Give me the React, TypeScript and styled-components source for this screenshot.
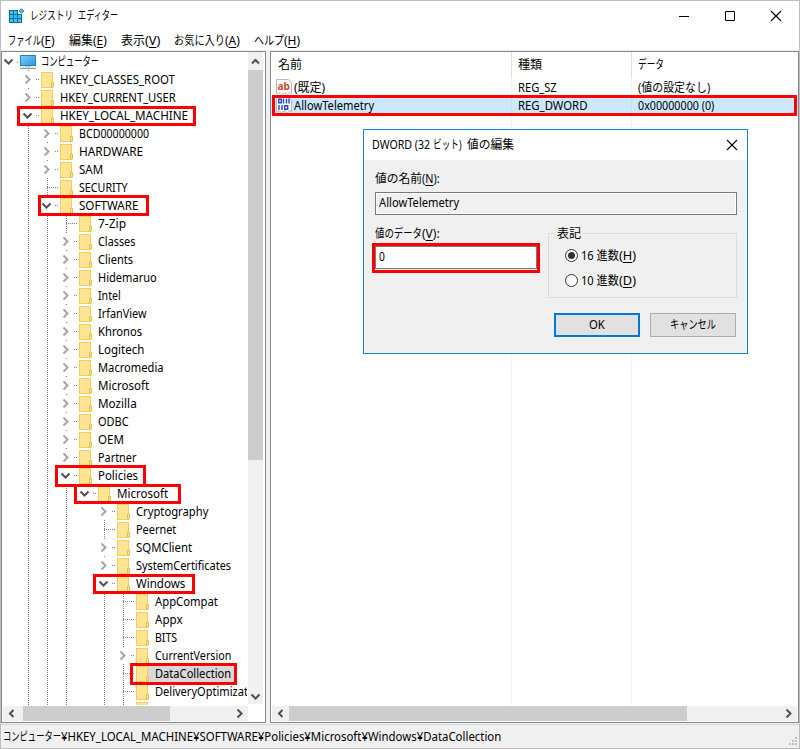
import React, { useLayoutEffect, useRef, useState } from 'react';
import styled, { createGlobalStyle, css } from 'styled-components';

const Global = createGlobalStyle`
  * { box-sizing: border-box; }
  body { margin: 0; }
  body, button, input { font: 12px/18px "Noto Sans", "Noto Sans CJK JP", sans-serif; color: #000; }
`;

/* Text squeezed or stretched horizontally to a given advance width. */
const FitBox = styled.span<{ $w: number }>`
  display: inline-block; width: ${p => p.$w}px; height: 18px; line-height: 18px; flex: none; white-space: nowrap; vertical-align: top;
`;
const FitInner = styled.span`
  display: inline-block; transform-origin: 0 50%; white-space: pre;
  u { text-decoration: underline; text-underline-offset: 2px; text-decoration-thickness: 1px; }
`;
function Fit({ w, children }: { w: number; children: React.ReactNode }) {
  const ref = useRef<HTMLSpanElement>(null);
  const [scale, setScale] = useState(1);
  useLayoutEffect(() => {
    if (ref.current) setScale(w / ref.current.offsetWidth);
  }, [w]);
  return <FitBox $w={w}><FitInner ref={ref} style={{ transform: `scaleX(${scale})` }}>{children}</FitInner></FitBox>;
}

const Window = styled.div`
  position: relative; width: 800px; height: 749px; border: 1px solid #bdbdbd; background: #f0f0f0;
  display: flex; flex-direction: column; overflow: hidden;
`;
const TitleBar = styled.header`
  height: 30px; flex: none; background: #fff; display: flex; align-items: center; padding-left: 8px;
`;
const AppTitle = styled.div`flex: 1; display: flex; gap: 5px; padding-left: 5px;`;
const CaptionButton = styled.button`
  width: 46px; height: 28px; border: 0; padding: 0; background: none; display: grid; place-items: center;
`;
const MenuBar = styled.nav`
  height: 19px; flex: none; background: #fff; display: flex; gap: 14px; padding: 1px 0 0 7px;
`;
const Menu = styled.div`display: flex;`;
const Panels = styled.main`
  height: 672px; flex: none; margin-top: 1px; display: flex; gap: 4px;
`;
const Panel = styled.section<{ $w: number }>`
  width: ${p => p.$w}px; height: 672px; flex: none; border: 1px solid #828790; background: #fff;
  display: flex; flex-direction: column; overflow: hidden;
`;
const TreeArea = styled.div`height: 653px; display: flex; flex: none;`;
const Tree = styled.ul`
  width: 245px; margin: 0; padding: 0; list-style: none; overflow: hidden; flex: none;
`;
const Row = styled.li`height: 18px; display: flex; white-space: nowrap;`;
const dotsY = css`repeating-linear-gradient(180deg, #808080 0 1px, transparent 1px 2px)`;
const dotsX = css`repeating-linear-gradient(90deg, #808080 0 1px, transparent 1px 2px)`;
const Margin = styled.span`width: 17px; flex: none;`;
const Guide = styled.span<{ $line?: boolean }>`
  width: 19px; height: 18px; flex: none;
  background: ${p => (p.$line ? css`${dotsY} 9px 0 / 1px 18px no-repeat` : 'none')};
`;
const Joint = styled.span<{ $kind: 'leaf' | 'open' | 'closed' | 'root' }>`
  width: ${p => (p.$kind === 'root' ? 17 : 22)}px; height: 18px; flex: none; display: flex; align-items: center;
  background: ${p =>
    p.$kind === 'leaf'
      ? css`${dotsY} 9px 0 / 1px 18px no-repeat, ${dotsX} 9px 9px / 11px 1px no-repeat`
      : p.$kind === 'root'
        ? css`${dotsX} 15px 10px / 2px 1px no-repeat`
        : css`${dotsY} 9px 0 / 1px 2px no-repeat, ${dotsX} 17px 9px / 4px 1px no-repeat`};
  svg { margin: 1px 0 0 ${p => (p.$kind === 'root' ? 1 : p.$kind === 'open' ? 3 : 3)}px; }
`;
const Label = styled.span<{ $sel?: boolean; $root?: boolean }>`
  height: 18px; display: flex; padding: 1px 3px 0 ${p => (p.$root ? 4 : 6)}px;
  ${p => p.$sel && css`background: #d9d9d9;`}
`;
const FolderSlot = styled.span<{ $sel?: boolean }>`
  width: 13px; height: 18px; flex: none; display: flex; ${p => p.$sel && css`background: #d9d9d9;`}
`;

const Chevron = ({ dir, color = '#505050' }: { dir: 'up' | 'down' | 'left' | 'right'; color?: string }) => {
  const d = { up: 'M2 7.5 5.5 4 9 7.5', down: 'M1.500 3.5 5.5 7.500 9.500 3.5', left: 'M7.5 2 4 5.5 7.5 9', right: 'M3.5 1.500 7.5 5.5 3.5 9.5' }[dir];
  return <svg width="11" height="11" viewBox="0 0 11 11"><path d={d} fill="none" stroke={color} strokeWidth="2" /></svg>;
};
const Folder = () => (
  <svg width="13" height="18" viewBox="0 0 13 18">
    <rect x="0.5" y="2.5" width="11" height="15" fill="#ffe591" stroke="#f0cd5c" />
    <path d="M10.5 12.5h2v4.500h-2z" fill="#ffe793" stroke="#e9bd45" />
  </svg>
);
const Computer = () => (
  <svg width="18" height="18" viewBox="0 0 18 18">
    <defs><linearGradient id="screen" x1="0" y1="0" x2="1" y2="1"><stop offset="0" stopColor="#7fd0fa" /><stop offset="1" stopColor="#2a96de" /></linearGradient></defs>
    <rect x="1.5" y="3.5" width="15" height="10" fill="url(#screen)" stroke="#2585c4" />
    <path d="M6 14.500h6" stroke="#b9c6ce" />
    <path d="M1 16.500h16" stroke="#8a9aa6" />
    <path d="M2 15.500h14" stroke="#dde4e8" />
  </svg>
);
const AppIcon = () => (
  <svg width="16" height="16" viewBox="0 0 16 16">
    <path d="M0 2h13v13H0z" fill="#0c6f9f" />
    <path d="M1 3h3v3H1zM5 3h3v3H5zM1 7h3v3H1zM5 7h3v3H5zM9 7h3v3H9zM1 11h3v3H1zM5 11h3v3H5zM9 11h3v3H9z" fill="#3cc0ec" />
    <path d="M9 1h5v5H9z" fill="#fff" />
    <path d="M12.500.7 14.800 3 12.500 5.300 10.200 3z" fill="#54c5ea" stroke="#1580ad" />
  </svg>
);

type TreeNode = [level: number, name: string, width: number, kind: 'leaf' | 'open' | 'closed'];
const nodes: TreeNode[] = [
  [1, 'HKEY_CLASSES_ROOT', 115, 'closed'], [1, 'HKEY_CURRENT_USER', 116, 'closed'], [1, 'HKEY_LOCAL_MACHINE', 128, 'open'],
  [2, 'BCD00000000', 70, 'closed'], [2, 'HARDWARE', 64, 'closed'], [2, 'SAM', 24, 'closed'], [2, 'SECURITY', 49, 'leaf'], [2, 'SOFTWARE', 59, 'open'],
  [3, '7-Zip', 28, 'leaf'], [3, 'Classes', 37, 'closed'], [3, 'Clients', 35, 'closed'], [3, 'Hidemaruo', 59, 'closed'], [3, 'Intel', 23, 'closed'],
  [3, 'IrfanView', 49, 'closed'], [3, 'Khronos', 44, 'closed'], [3, 'Logitech', 46, 'closed'], [3, 'Macromedia', 66, 'closed'],
  [3, 'Microsoft', 51, 'closed'], [3, 'Mozilla', 39, 'closed'], [3, 'ODBC', 31, 'closed'], [3, 'OEM', 26, 'closed'], [3, 'Partner', 38, 'closed'],
  [3, 'Policies', 40, 'open'], [4, 'Microsoft', 51, 'open'], [5, 'Cryptography', 72, 'closed'], [5, 'Peernet', 40, 'leaf'],
  [5, 'SQMClient', 56, 'closed'], [5, 'SystemCertificates', 95, 'closed'], [5, 'Windows', 49, 'open'],
  [6, 'AppCompat', 63, 'leaf'], [6, 'Appx', 28, 'leaf'], [6, 'BITS', 22, 'leaf'], [6, 'CurrentVersion', 76, 'closed'],
  [6, 'DataCollection', 76, 'leaf'], [6, 'DeliveryOptimizat', 93, 'leaf'], [6, '', 0, 'leaf'],
];

const VScroll = styled.div`
  width: 15px; height: 652px; margin-left: 1px; background: #f0f0f0; display: flex; flex-direction: column; align-items: center; flex: none;
`;
const VThumb = styled.div`width: 15px; height: 390px; background: #cdcdcd; margin-bottom: auto;`;
const ScrollCap = styled.div<{ $w: number; $h: number }>`
  width: ${p => p.$w}px; height: ${p => p.$h}px; display: grid; place-items: center; flex: none;
`;
const HScroll = styled.div<{ $w: number }>`
  width: ${p => p.$w}px; height: 15px; margin-left: 1px; margin-top: 1px; background: #f0f0f0; display: flex; flex: none;
`;
const HThumb = styled.div<{ $w: number; $gap?: number }>`
  width: ${p => p.$w}px; height: 15px; background: #cdcdcd; margin-left: ${p => p.$gap ?? 0}px; margin-right: auto;
`;

const List = styled.div`
  height: 653px; flex: none; display: grid; grid-template-columns: 241px 120px 1fr; grid-template-rows: 26px 18px 18px 1fr;
`;
const Cell = styled.div<{ $head?: boolean; $sel?: boolean; $last?: boolean; $pad: number }>`
  display: flex; padding-left: ${p => p.$pad}px; padding-top: ${p => (p.$head ? 4 : 1)}px;
  border-right: ${p => (p.$last ? '0' : `1px solid ${p.$head ? '#e0e0e0' : p.$sel ? '#c2dff6' : '#ecf4fc'}`)};
  background: ${p => (p.$sel ? '#cce8ff' : '#fff')};
  svg { flex: none; margin: 0 2px 0 0; }
`;
const ValueIcon = ({ binary }: { binary?: boolean }) => (
  <svg width="16" height="16" viewBox="0 0 16 16">
    <path d="M.5.5h12l3 3v11l-2-1-2 2-3-2-3 2-2-1.500-3 .5z" fill="#fff" stroke="#b8b8b8" />
    {binary ? (
      <g fill="none" stroke="#2943c9" strokeWidth="1.4"><path d="M2.700 2.200h2.600v3.600H2.700zM7.500 1.500v5M10.500 1.500v5M13 1.500v5M3 8v5M6 8v5M8.700 8.700h3v3.600h-3z" /></g>
    ) : (
      <text x="1.500" y="10.500" fontFamily="Noto Sans" fontWeight="bold" fontSize="10.500" textLength="12.500" lengthAdjust="spacingAndGlyphs" fill="#d0492b">ab</text>
    )}
  </svg>
);

const StatusBar = styled.footer`
  height: 24px; margin-top: 1px; border-top: 1px solid #d7d7d7; display: flex; align-items: center; padding-left: 2px; flex: none;
`;
const Grip = styled.svg`margin: 9px 1px 0 auto;`;

const Mark = styled.div<{ $x: number; $y: number; $w: number; $h: number }>`
  position: absolute; left: ${p => p.$x - 1}px; top: ${p => p.$y - 1}px; width: ${p => p.$w}px; height: ${p => p.$h}px;
  border: 3px solid #f00; pointer-events: none;
`;

const Dialog = styled.div`
  position: absolute; left: 362px; top: 128px; width: 385px; height: 225px; border: 1px solid #1883d7; background: #f0f0f0;
`;
const DialogTitle = styled.div`
  height: 30px; background: #fff; display: flex; align-items: center; justify-content: space-between; padding: 0 9px 0 8px;
`;
const DialogBody = styled.div`padding: 10px 10px 0 11px;`;
const TextLine = styled.div`display: flex; height: 18px;`;
const Field = styled.div<{ $editable?: boolean }>`
  height: 23px; width: ${p => (p.$editable ? 162 : 362)}px; margin-top: ${p => (p.$editable ? 3 : 4)}px; border: 1px solid #7a7a7a;
  box-shadow: inset 0 0 0 1px #fff; background: ${p => (p.$editable ? '#fff' : '#f0f0f0')}; padding: 1px 0 0 3px;
`;
const Columns = styled.div`display: flex; justify-content: space-between; margin-top: 10px;`;
const Group = styled.fieldset`
  width: 189px; height: 74px; margin: -1px 0 0; padding: 1px 0 0 16px; border: 1px solid #dcdcdc; min-width: 0;
  legend { margin-left: -11px; padding: 1px 2px 0 3px; height: 18px; display: flex; }
`;
const Radio = styled.label`display: flex; height: 25px; align-items: center;`;
const Dot = styled.span<{ $on?: boolean }>`
  width: 13px; height: 13px; margin-right: 3px; border: 1px solid #333; border-radius: 50%; background: #fff; display: grid; place-items: center;
  ${p => p.$on && css`&::after { content: ''; width: 7px; height: 7px; border-radius: 50%; background: #333; }`}
`;
const Buttons = styled.div`display: flex; justify-content: flex-end; gap: 10px; margin-top: 15px; padding-right: 1px;`;
const PushButton = styled.button<{ $primary?: boolean }>`
  width: 86px; height: 24px; padding: 0; display: flex; align-items: center; justify-content: center;
  background: #e1e1e1; border: ${p => (p.$primary ? '2px solid #0078d7' : '1px solid #adadad')};
`;
const CloseX = () => <svg width="12" height="12" viewBox="0 0 12 12"><path d="m1 1 10 10M11 1 1 11" stroke="#000" strokeWidth="1.1" /></svg>;

export default function App() {
  return (
    <>
      <Global />
      <Window>
        <TitleBar>
          <AppIcon />
          <AppTitle><Fit w={43}>レジストリ</Fit><Fit w={40}>エディター</Fit></AppTitle>
          <CaptionButton><svg width="12" height="12"><path d="M1 6.500h10" stroke="#000" /></svg></CaptionButton>
          <CaptionButton><svg width="12" height="12"><path d="M1.500 1.500h9v9h-9z" stroke="#000" fill="none" /></svg></CaptionButton>
          <CaptionButton><CloseX /></CaptionButton>
        </TitleBar>
        <MenuBar>
          <Menu><Fit w={33}>ファイル</Fit><Fit w={14}>(<u>F</u>)</Fit></Menu>
          <Menu><Fit w={24}>編集</Fit><Fit w={14}>(<u>E</u>)</Fit></Menu>
          <Menu><Fit w={24}>表示</Fit><Fit w={15}>(<u>V</u>)</Fit></Menu>
          <Menu><Fit w={51}>お気に入り</Fit><Fit w={15}>(<u>A</u>)</Fit></Menu>
          <Menu><Fit w={30}>ヘルプ</Fit><Fit w={16}>(<u>H</u>)</Fit></Menu>
        </MenuBar>
        <Panels>
          <Panel $w={265}>
            <TreeArea>
              <Tree>
                <Row><Joint $kind="root"><Chevron dir="down" /></Joint><Computer /><Label $root><Fit w={58}>コンピューター</Fit></Label></Row>
                {nodes.map(([level, name, width, kind], i) => (
                  <Row key={i}>
                    <Margin />
                    {Array.from({ length: level - 1 }, (_, g) => <Guide key={g} $line={g !== 3} />)}
                    <Joint $kind={kind}>
                      {kind === 'open' && <Chevron dir="down" />}
                      {kind === 'closed' && <Chevron dir="right" color="#a6a6a6" />}
                    </Joint>
                    <FolderSlot $sel={name === 'DataCollection'}><Folder /></FolderSlot>
                    {name && <Label $sel={name === 'DataCollection'}><Fit w={width}>{name}</Fit></Label>}
                  </Row>
                ))}
              </Tree>
              <VScroll>
                <ScrollCap $w={15} $h={18}><Chevron dir="up" /></ScrollCap>
                <VThumb />
                <ScrollCap $w={15} $h={15}><Chevron dir="down" /></ScrollCap>
              </VScroll>
            </TreeArea>
            <HScroll $w={245}>
              <ScrollCap $w={17} $h={15}><Chevron dir="left" /></ScrollCap>
              <HThumb $w={147} $gap={3} />
              <ScrollCap $w={17} $h={15}><Chevron dir="right" /></ScrollCap>
            </HScroll>
          </Panel>
          <Panel $w={529}>
            <List>
              <Cell $head $pad={7}><Fit w={24}>名前</Fit></Cell>
              <Cell $head $pad={6}><Fit w={24}>種類</Fit></Cell>
              <Cell $head $last $pad={6}><Fit w={26}>データ</Fit></Cell>
              <Cell $pad={5}><ValueIcon /><Fit w={31}>(既定)</Fit></Cell>
              <Cell $pad={6}><Fit w={39}>REG_SZ</Fit></Cell>
              <Cell $last $pad={6}><Fit w={72}>(値の設定なし)</Fit></Cell>
              <Cell $sel $pad={5}><ValueIcon binary /><Fit w={80}>AllowTelemetry</Fit></Cell>
              <Cell $sel $pad={6}><Fit w={69}>REG_DWORD</Fit></Cell>
              <Cell $sel $last $pad={6}><Fit w={76}>0x00000000 (0)</Fit></Cell>
              <Cell $pad={0} /><Cell $pad={0} /><Cell $last $pad={0} />
            </List>
            <HScroll $w={525}>
              <ScrollCap $w={17} $h={15}><Chevron dir="left" /></ScrollCap>
              <HThumb $w={398} />
              <ScrollCap $w={17} $h={15}><Chevron dir="right" /></ScrollCap>
            </HScroll>
          </Panel>
        </Panels>
        <StatusBar>
          <Fit w={58}>コンピューター</Fit><Fit w={440}>¥HKEY_LOCAL_MACHINE¥SOFTWARE¥Policies¥Microsoft¥Windows¥DataCollection</Fit>
          <Grip width="9" height="9"><path d="M6 0h2v2H6zM3 3h2v2H3zM6 3h2v2H6zM0 6h2v2H0zM3 6h2v2H3zM6 6h2v2H6z" fill="#bfbfbf" /></Grip>
        </StatusBar>

        <Mark $x={17} $y={106} $w={179} $h={20} />
        <Mark $x={38} $y={195} $w={111} $h={21} />
        <Mark $x={55} $y={465} $w={91} $h={22} />
        <Mark $x={74} $y={484} $w={107} $h={20} />
        <Mark $x={93} $y={574} $w={102} $h={20} />
        <Mark $x={130} $y={663} $w={107} $h={22} />
        <Mark $x={272} $y={95} $w={525} $h={21} />

        <Dialog>
          <DialogTitle>
            <TextLine><Fit w={61}>DWORD (32 </Fit><Fit w={31}>ビット) </Fit><Fit w={50}> 値の編集</Fit></TextLine>
            <CloseX />
          </DialogTitle>
          <DialogBody>
            <TextLine><Fit w={47}>値の名前</Fit><Fit w={18}>(<u>N</u>):</Fit></TextLine>
            <Field><Fit w={80}>AllowTelemetry</Fit></Field>
            <Columns>
              <div>
                <TextLine><Fit w={47}>値のデータ</Fit><Fit w={18}>(<u>V</u>):</Fit></TextLine>
                <Field $editable><Fit w={6}>0</Fit></Field>
              </div>
              <Group>
                <legend><Fit w={24}>表記</Fit></legend>
                <Radio><Dot $on /><Fit w={38}>16 進数</Fit><Fit w={17}>(<u>H</u>)</Fit></Radio>
                <Radio><Dot /><Fit w={38}>10 進数</Fit><Fit w={17}>(<u>D</u>)</Fit></Radio>
              </Group>
            </Columns>
            <Buttons>
              <PushButton $primary><Fit w={16}>OK</Fit></PushButton>
              <PushButton><Fit w={46}>キャンセル</Fit></PushButton>
            </Buttons>
          </DialogBody>
        </Dialog>
        <Mark $x={372} $y={243} $w={168} $h={30} />
      </Window>
    </>
  );
}
